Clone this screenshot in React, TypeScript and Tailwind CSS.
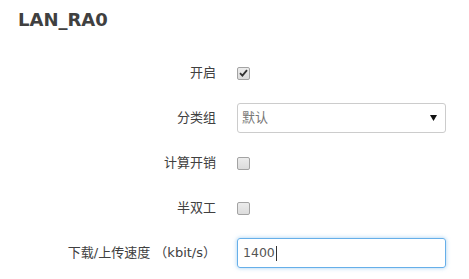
import React from "react";

const font = "font-['DejaVu_Sans','Noto_Sans_CJK_SC',sans-serif]";

// Small checkbox drawn like the old Windows style one
function Box({ checked }: { checked?: boolean }) {
  return (
    <span className="flex h-[13px] w-[13px] items-center justify-center rounded-[2px] border border-[#a3a3a3] bg-gradient-to-b from-[#ececec] to-[#dcdcdc]">
      {checked && (
        <svg width="9" height="8" viewBox="0 0 9 8">
          <path d="M1 4.2 L3.4 6.6 L8 1.2" fill="none" stroke="#333" strokeWidth="1.8" />
        </svg>
      )}
    </span>
  );
}

function Row({ label, children }: { label: string; children: React.ReactNode }) {
  return (
    <div className="flex h-[30px] items-center">
      <div className="w-[216px] whitespace-nowrap text-right text-[13px] text-[#404040]">{label}</div>
      <div className="ml-[21px] flex w-[209px] items-center">{children}</div>
    </div>
  );
}

export default function App() {
  return (
    <div className={`h-[279px] w-[469px] bg-white ${font}`}>
      <h2 className="pl-[18px] pt-[8px] text-[18px] font-bold leading-[24px] text-[#404040]">LAN_RA0</h2>

      <div className="mt-[26px] flex flex-col gap-[15px]">
        <Row label="开启">
          <Box checked />
        </Row>
        <Row label="分类组">
          <div className="flex h-[30px] w-full items-center justify-between rounded-[3px] border border-[#ccc] pl-[4px] pr-[8px] text-[13px] text-[#777]">
            <span>默认</span>
            <svg width="7" height="6" viewBox="0 0 7 6">
              <path d="M0 0 H7 L3.5 6 Z" fill="#111" />
            </svg>
          </div>
        </Row>
        <Row label="计算开销">
          <Box />
        </Row>
        <Row label="半双工">
          <Box />
        </Row>
        <Row label="下载/上传速度 （kbit/s）">
          <div className="flex h-[30px] w-full items-center rounded-[3px] border border-[#66afe9] pl-[5px] text-[12.5px] text-[#555] shadow-[0_0_4px_rgba(102,175,233,0.6)]">
            1400<span className="ml-[1px] h-[15px] w-px bg-[#333]" />
          </div>
        </Row>
      </div>
    </div>
  );
}
